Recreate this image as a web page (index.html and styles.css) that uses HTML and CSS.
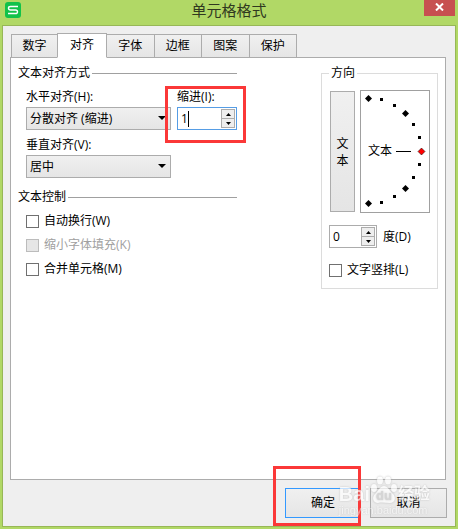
FILE: index.html
```html
<!doctype html>
<html lang="zh-CN">

  <head>
    <meta charset="utf-8">
    <meta name="viewport" content="width=device-width, initial-scale=1">
    <title>单元格格式</title>
    <link rel="stylesheet" href="styles.css">
  </head>

  <body>
    <header class="titlebar">
      <svg class="logo" viewBox="0 0 16 16">
        <rect width="16" height="16" rx="3" fill="#12c24a"/>
        <path d="M13 4.500H5.500Q3.500 4.500 3.500 6.200T5.500 8H10.500Q12.500 8 12.500 9.800T10.500 11.500H3" fill="none" stroke="#fff" stroke-width="1.400"/>
      </svg>
      <h1>单元格格式</h1>
      <button class="close" aria-label="关闭">
        <svg viewBox="0 0 9 8"><path d="M1 .5l7 7M8 .5l-7 7" stroke="#fff" stroke-width="2"/></svg>
      </button>
    </header>

    <main class="client">
      <nav class="tabs">
        <button class="tab">数字</button>
        <button class="tab active">对齐</button>
        <button class="tab">字体</button>
        <button class="tab">边框</button>
        <button class="tab">图案</button>
        <button class="tab">保护</button>
      </nav>

      <div class="panel">
        <div class="left">
          <fieldset class="group">
            <legend>文本对齐方式</legend>
            <div class="fields">
              <div class="field">
                <label for="horizontal">水平对齐(H):</label>
                <div class="drop">
                  <select id="horizontal"><option>分散对齐 (缩进)</option></select>
                </div>
              </div>
              <div class="field marked">
                <label for="indent">缩进(I):</label>
                <div class="spin focused">
                  <input id="indent" type="text" value="1">
                  <i class="caret"></i>
                  <div class="steps">
                    <button aria-label="增加"><svg viewBox="0 0 5 3"><path d="M0 3h5L2.500 0z"/></svg></button>
                    <button aria-label="减少"><svg viewBox="0 0 5 3"><path d="M0 0h5L2.500 3z"/></svg></button>
                  </div>
                </div>
              </div>
              <div class="field">
                <label for="vertical">垂直对齐(V):</label>
                <div class="drop">
                  <select id="vertical"><option>居中</option></select>
                </div>
              </div>
            </div>
          </fieldset>

          <fieldset class="group checks">
            <legend>文本控制</legend>
            <label class="check"><input type="checkbox">自动换行(W)</label>
            <label class="check disabled"><input type="checkbox" disabled>缩小字体填充(K)</label>
            <label class="check"><input type="checkbox">合并单元格(M)</label>
          </fieldset>
        </div>

        <fieldset class="direction">
          <legend>方向</legend>
          <div class="dials">
            <button class="vertical-text">文<br>本</button>
            <div class="dial">
              <svg viewBox="0 0 68 121">
                <defs>
                  <path id="big" d="M0-3.500L3.500 0 0 3.500-3.500 0z"/>
                  <rect id="dot" x="-1.500" y="-1.500" width="3" height="3"/>
                </defs>
                <use href="#big" x="7.500" y="7.500"/>
                <use href="#dot" x="20.500" y="8.500"/>
                <use href="#dot" x="33.500" y="14.500"/>
                <use href="#big" x="44.500" y="22.500"/>
                <use href="#dot" x="52.500" y="33.500"/>
                <use href="#dot" x="58.500" y="46.500"/>
                <use href="#big" x="60.500" y="60.500" fill="#f00" stroke="#000" stroke-width=".5"/>
                <use href="#dot" x="58.500" y="73.500"/>
                <use href="#dot" x="52.500" y="86.500"/>
                <use href="#big" x="44.500" y="97.500"/>
                <use href="#dot" x="33.500" y="105.500"/>
                <use href="#dot" x="20.500" y="111.500"/>
                <use href="#big" x="7.500" y="112.500"/>
                <path d="M35 60h15v1H35z"/>
                <text x="7" y="64">文本</text>
              </svg>
            </div>
          </div>
          <div class="degree">
            <div class="spin">
              <input id="degree" type="text" value="0">
              <div class="steps">
                <button aria-label="增加"><svg viewBox="0 0 5 3"><path d="M0 3h5L2.500 0z"/></svg></button>
                <button aria-label="减少"><svg viewBox="0 0 5 3"><path d="M0 0h5L2.500 3z"/></svg></button>
              </div>
            </div>
            <label for="degree">度(D)</label>
          </div>
          <label class="check"><input type="checkbox">文字竖排(L)</label>
        </fieldset>
      </div>

      <footer class="footer">
        <div class="marked-ok"><button class="btn primary">确定</button></div>
        <button class="btn">取消</button>
        <div class="watermark">
          <div class="brand">
            <span>Bai</span>
            <svg viewBox="0 0 28 28">
              <ellipse cx="4" cy="12" rx="3" ry="4"/>
              <ellipse cx="10" cy="4.500" rx="3" ry="4"/>
              <ellipse cx="18" cy="4.500" rx="3" ry="4"/>
              <ellipse cx="24" cy="12" rx="3" ry="4"/>
              <path d="M14 10c4 0 5 4 8 7 5 4 3 10-2 10-4 0-8-1-12 0-5 0-7-6-2-10 3-3 4-7 8-7z"/>
              <text x="6" y="24">du</text>
            </svg>
            <span class="jingyan">经验</span>
          </div>
          <div class="site">jingyan.baidu.com</div>
        </div>
      </footer>
    </main>
  </body>

</html>
```

FILE: styles.css
```css
* {
  box-sizing: border-box;
}

body {
  margin: 0;
  padding: 0 2px 2px;
  min-height: 100vh;
  display: flex;
  flex-direction: column;
  background: #b1d866;
  color: #000;
}

body,
button,
input,
select {
  font-family: "Open Sans", "Noto Sans CJK SC", sans-serif;
  font-size: 12px;
  line-height: 16px;
}

button,
input,
select,
fieldset,
legend {
  margin: 0;
  padding: 0;
}

button,
input,
select {
  color: #000;
}

svg {
  display: block;
}

.titlebar {
  height: 25px;
  display: grid;
  grid-template-columns: 32px 1fr 32px;
  align-items: start;
}

.logo {
  width: 16px;
  margin: 2px 3px;
}

h1 {
  margin: 0;
  font-size: 15px;
  font-weight: 400;
  line-height: 20px;
  text-align: center;
  color: #303820;
}

.close {
  width: 31px;
  height: 16px;
  padding-bottom: 2px;
  display: grid;
  place-items: center;
  border: 0;
  background: #c75050;
}

.close svg {
  width: 9px;
  height: 8px;
}

.client {
  flex: 1;
  display: flex;
  flex-direction: column;
  padding: 7px 8px 8px 7px;
  border: 1px solid #97b757;
  background: #efefef;
}

.tabs {
  display: flex;
  align-items: flex-end;
  width: 286px;
  margin-left: 1px;
  margin-bottom: -1px;
  height: 25px;
}

.tab {
  flex: 1;
  height: 24px;
  border: 1px solid #acacac;
  border-left-width: 0;
  background: linear-gradient(#f0f0f0, #e5e5e5);
}

.tab:first-child {
  flex: 0 0 46px;
  border-left-width: 1px;
  border-right-width: 0;
}

.tab.active {
  flex: 0 0 50px;
  height: 25px;
  padding-bottom: 2px;
  border-left-width: 1px;
  border-bottom-color: #fff;
  background: #fff;
  z-index: 1;
}

.panel {
  flex: 1;
  display: flex;
  justify-content: space-between;
  align-items: flex-start;
  margin-right: 1px;
  padding: 7px;
  border: 1px solid #acacac;
  background: #fff;
}

.left {
  width: 219px;
}

.group {
  border: 0;
  border-top: 1px solid #a0a0a0;
  padding: 8px 0 11px 8px;
}

.group legend {
  margin-left: -8px;
  padding-right: 2px;
}

.fields {
  display: grid;
  grid-template-columns: 145px 60px;
  gap: 7px 6px;
}

.field label {
  display: block;
  margin-bottom: 2px;
}

.marked,
.marked-ok {
  position: relative;
}

.marked::after,
.marked-ok::after {
  content: "";
  position: absolute;
  inset: -3px -9px -13px -12px;
  border: 3px solid #fb3838;
  pointer-events: none;
}

.marked {
  align-self: start;
}

.marked-ok::after {
  inset: -22px 0 -8px -12px;
}

.drop {
  position: relative;
}

.drop::after {
  content: "";
  position: absolute;
  top: 9px;
  right: 5px;
  border: 4px solid transparent;
  border-top-color: #000;
  border-bottom: 0;
  pointer-events: none;
}

select {
  display: block;
  appearance: none;
  width: 100%;
  height: 23px;
  padding-left: 3px;
  border: 1px solid #acacac;
  border-radius: 0;
  background: linear-gradient(#f0f0f0, #e5e5e5);
}

.spin {
  position: relative;
  display: flex;
  height: 23px;
  padding: 1px;
  border: 1px solid #acacac;
  background: #fff;
}

.spin.focused {
  border-color: #569de5;
}

.spin input {
  flex: 1;
  min-width: 0;
  padding-left: 2px;
  border: 0;
  background: none;
  outline: 0;
}

.caret {
  position: absolute;
  left: 10px;
  top: 3px;
  width: 1px;
  height: 16px;
  background: #000;
}

.steps {
  display: flex;
  flex-direction: column;
  width: 14px;
}

.steps button {
  flex: 1;
  display: grid;
  place-items: center;
  border: 1px solid #acacac;
  background: #eee;
}

.steps button + button {
  margin-top: -1px;
}

.steps svg {
  width: 5px;
  height: 3px;
}

.checks {
  padding-top: 4px;
}

.check {
  display: flex;
  align-items: center;
  gap: 5px;
  height: 24px;
}

.check input {
  appearance: none;
  width: 13px;
  height: 13px;
  border: 1px solid #707070;
  background: #fff;
}

.check.disabled {
  color: #a0a0a0;
}

.check.disabled input {
  border-color: #bcbcbc;
  background: #e6e6e6;
}

.direction {
  width: 117px;
  border: 1px solid #dcdcdc;
  padding: 9px 7px 6px;
}

.direction legend {
  padding: 0 2px;
}

.dials {
  display: flex;
  align-items: center;
  justify-content: space-between;
  margin-bottom: 12px;
  padding-left: 1px;
}

.vertical-text {
  width: 25px;
  height: 121px;
  line-height: 17px;
  border: 1px solid #acacac;
  background: linear-gradient(#f0f0f0, #e5e5e5);
}

.dial {
  width: 70px;
  height: 123px;
  border: 1px solid #a0a0a0;
}

.degree {
  display: flex;
  align-items: center;
  gap: 6px;
  margin-bottom: 10px;
}

.degree .spin {
  width: 48px;
}

.footer {
  position: relative;
  display: flex;
  justify-content: flex-end;
  gap: 9px;
  padding-top: 8px;
}

.btn {
  display: block;
  width: 77px;
  height: 30px;
  border: 1px solid #acacac;
  background: linear-gradient(#f0f0f0, #e5e5e5);
}

.btn.primary {
  border-color: #3399ff;
}

.marked-ok .btn {
  width: 76px;
}

/* overlaps the two buttons */
.watermark {
  position: absolute;
  right: 17px;
  bottom: 2px;
  color: #fff;
  font-family: "Liberation Sans", "Noto Sans CJK SC", sans-serif;
  text-shadow: 0 0 2px #aaa;
  opacity: .7;
  pointer-events: none;
}

.brand {
  display: flex;
  align-items: flex-end;
  font-size: 20px;
  font-weight: 700;
  line-height: 20px;
}

.brand svg {
  width: 28px;
  height: 28px;
  fill: #fff;
  filter: drop-shadow(0 0 1px #aaa);
}

.brand text {
  fill: #ccc;
  font-size: 13px;
}

.brand .jingyan {
  font-size: 16px;
}

.site {
  font-size: 11px;
  line-height: 12px;
  opacity: .7;
}
```
